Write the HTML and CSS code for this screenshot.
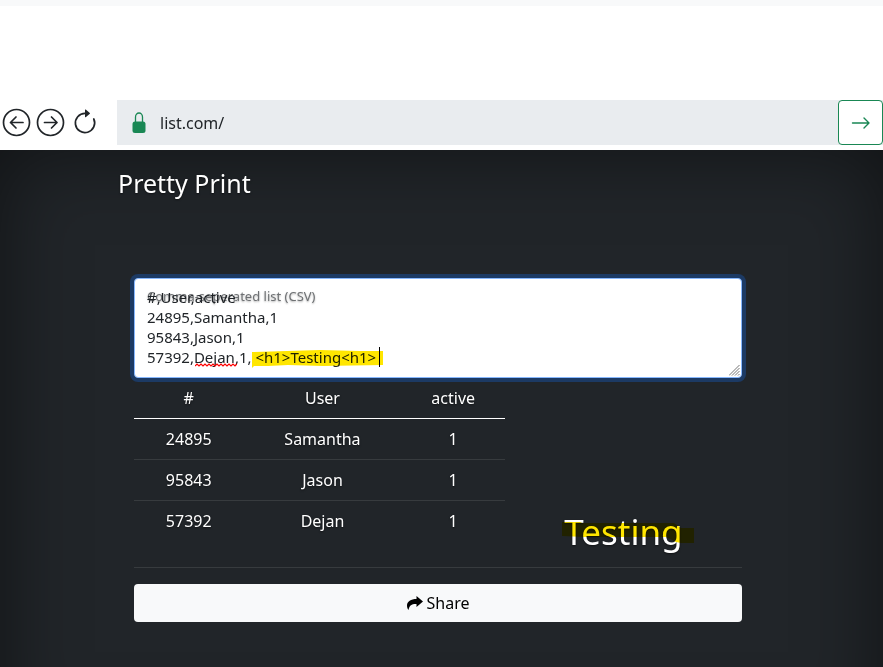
FILE: index.html
```html
<!DOCTYPE html>
<html lang="en">
<head>
<meta charset="utf-8">
<title>Pretty Print</title>
<link rel="stylesheet" href="styles.css">
</head>
<body>
<div class="strip"></div>
<nav class="browser">
  <div class="nav-buttons">
    <button class="icon-button" type="button" aria-label="Back">
      <svg width="28" height="28" viewBox="0 0 28 28" fill="none" stroke="currentColor" stroke-width="1.7" stroke-linecap="round" stroke-linejoin="round"><circle cx="13.500" cy="13.500" r="13"/><path d="M20 13.500H7.500M13 8l-5.500 5.500 5.500 5.500"/></svg>
    </button>
    <button class="icon-button" type="button" aria-label="Forward">
      <svg width="28" height="28" viewBox="0 0 28 28" fill="none" stroke="currentColor" stroke-width="1.7" stroke-linecap="round" stroke-linejoin="round"><circle cx="13.500" cy="13.500" r="13"/><path d="M7.500 13.500H20M14.500 8l5.500 5.500-5.500 5.500"/></svg>
    </button>
    <button class="icon-button" type="button" aria-label="Reload">
      <svg width="28" height="28" viewBox="0 0 16 16" fill="currentColor"><path fill-rule="evenodd" d="M8 3a5 5 0 1 0 4.546 2.914.5.5 0 0 1 .908-.417A6 6 0 1 1 8 2z"/><path d="M8 4.466V.534a.25.25 0 0 1 .41-.192l2.360 1.966c.12.1.12.284 0 .384L8.410 4.658A.25.25 0 0 1 8 4.466"/></svg>
    </button>
  </div>
  <form class="address">
    <label class="lock" for="url" aria-label="Address">
      <svg width="14" height="22" viewBox="0 0 14 22"><path d="M3.500 10V5a3.500 4 0 0 1 7 0v5" fill="none" stroke="currentColor" stroke-width="1.300"/><rect x="0.500" y="9.500" width="13" height="11.500" rx="2.500" fill="currentColor"/></svg>
    </label>
    <input class="url" id="url" type="text" value="list.com/">
    <button class="go" type="button" aria-label="Go">
      <svg width="20" height="14" viewBox="0 0 20 14" fill="none" stroke="currentColor" stroke-width="1.400" stroke-linecap="round" stroke-linejoin="round"><path d="M1.500 7H18M13 2l5 5-5 5"/></svg>
    </button>
  </form>
</nav>
<div class="page">
  <div class="cover">
    <h3 class="brand">Pretty Print</h3>
    <main class="content">
      <div class="field">
        <textarea class="csv" id="csv" spellcheck="false">#,User,active
24895,Samantha,1
95843,Jason,1
57392,Dejan,1, &lt;h1&gt;Testing&lt;h1&gt;</textarea>
        <label class="csv-label" for="csv">Comma-seperated list (CSV)</label>
        <svg class="marker marker-input" width="131" height="18" viewBox="0 0 131 18"><path d="M0 2L68 0l40 1 23 0v14l-60 1-35-1-20 1-14 0-2 2H0z" fill="#ffe600"/></svg>
        <svg class="squiggle" width="42" height="4" viewBox="0 0 42 4"><path d="M0 3l2-2 2 2 2-2 2 2 2-2 2 2 2-2 2 2 2-2 2 2 2-2 2 2 2-2 2 2 2-2 2 2 2-2 2 2 2-2 2 2 2-2" fill="none" stroke="#f00" stroke-width="1.200"/></svg>
        <span class="caret"></span>
        <svg class="grip" width="11" height="11" viewBox="0 0 11 11" fill="none" stroke="#777" stroke-width="1"><path d="M0 10.500L10.500 0M3 10.500L10.500 3M6 10.500L10.500 6M9 10.500L10.500 9"/></svg>
      </div>
      <table class="result">
        <colgroup><col class="c-id"><col class="c-user"><col class="c-active"><col></colgroup>
        <thead>
          <tr><th scope="col">#</th><th scope="col">User</th><th scope="col">active</th></tr>
        </thead>
        <tbody>
          <tr><td>24895</td><td>Samantha</td><td>1</td></tr>
          <tr><td>95843</td><td>Jason</td><td>1</td></tr>
          <tr><td>57392</td><td>Dejan</td><td>1</td><td class="extra"><h1>Testing</h1>
            <svg class="marker marker-result" width="132" height="22" viewBox="0 0 132 22"><path d="M0 0h18l2 1h92l7 5h13v15h-13l-5-1-10-5H22l-22-1z" fill="#ffe600"/></svg></td></tr>
        </tbody>
      </table>
      <button class="share" type="button">
        <svg width="16" height="16" viewBox="0 0 16 16"><path d="M9.500 1L16 6.500 9.500 12V9C5 8.800 2.500 10 1.500 15 .800 14 0 12.500 0 10.500 0 6.500 4 4 9.500 4z" fill="currentColor"/></svg>
        <span>Share</span>
      </button>
    </main>
  </div>
</div>
</body>
</html>
```
FILE: styles.css
```css
* { box-sizing: border-box; }

body {
  margin: 0;
  min-height: 100vh;
  display: flex;
  flex-direction: column;
  background: #fff;
  color: #212529;
  font: 16px/24px "Noto Sans", sans-serif;
}

button, input, textarea { font: inherit; color: inherit; }

svg { display: block; }

.strip { height: 6px; background: #f8f9fa; }

.browser {
  display: flex;
  align-items: center;
  margin-top: 94px;
  margin-bottom: 5px;
}

.nav-buttons {
  display: flex;
  gap: 6px;
  width: 117px;
  padding-left: 3px;
}

.icon-button {
  padding: 0;
  border: 0;
  background: none;
}

.icon-button svg { overflow: visible; }

.address {
  flex: 1;
  display: flex;
  align-items: center;
  height: 45px;
  background: #e9ecef;
}

.lock {
  padding-left: 15px;
  color: #198754;
}

.url {
  flex: 1;
  min-width: 0;
  padding: 0 14px;
  border: 0;
  outline: 0;
  background: none;
}

.go {
  display: grid;
  place-items: center;
  width: 45px;
  height: 45px;
  padding: 0;
  border: 1px solid #198754;
  border-radius: 4px;
  background: #fff;
  color: #198754;
}

.page {
  position: relative;
  flex: 1;
  padding-right: 7px;
  overflow: hidden;
  background: #212529;
  color: #fff;
  text-shadow: 0 1px 2px rgba(0, 0, 0, .5);
}

/* The vignette continues past the lower edge of the window. */
.page::before {
  content: "";
  position: absolute;
  inset: 0 0 -80px;
  box-shadow: inset 0 0 80px rgba(0, 0, 0, .5);
}

.cover {
  position: relative;
  max-width: 672px;
  margin: 0 auto;
  padding: 16px;
}

.brand {
  margin: 0;
  font-size: 25px;
  font-weight: 400;
  line-height: 34px;
}

.content {
  padding: 78px 16px 29px;
}

.field {
  position: relative;
  color: #212529;
}

.csv {
  display: block;
  width: 100%;
  height: 100px;
  padding: 8px 12px;
  border: 1px solid #86b7fe;
  border-radius: 4px;
  outline: 0;
  background: #fff;
  box-shadow: 0 0 0 4px #1c3a64;
  font-size: 15px;
  line-height: 20px;
  resize: none;
}

.csv-label {
  position: absolute;
  top: 8px;
  left: 13px;
  font-size: 13px;
  line-height: 20px;
  opacity: .65;
  pointer-events: none;
}

.marker {
  position: absolute;
  mix-blend-mode: multiply;
  pointer-events: none;
}

.marker-input { top: 72px; left: 118px; }

.squiggle { position: absolute; top: 85px; left: 61px; }

.caret {
  position: absolute;
  top: 69px;
  left: 245px;
  width: 1px;
  height: 20px;
  background: #000;
}

.grip {
  position: absolute;
  right: 2px;
  bottom: 2px;
  pointer-events: none;
}

.result {
  width: 100%;
  margin-bottom: 16px;
  border-collapse: collapse;
  table-layout: fixed;
  text-align: center;
}

.c-id { width: 18%; }
.c-user { width: 26%; }
.c-active { width: 17%; }

.result th,
.result td {
  padding: 8px;
  border-bottom: 1px solid #373b3e;
  font-weight: 400;
  vertical-align: top;
}

.result th { border-bottom-color: #fff; }

.result .extra { position: relative; }

.extra h1 {
  margin: 0 0 4px;
  font-size: 35px;
  font-weight: 400;
  line-height: 46px;
}

.marker-result { top: 21px; left: 57px; }

.share {
  display: flex;
  align-items: center;
  justify-content: center;
  gap: 4px;
  width: 100%;
  height: 38px;
  border: 0;
  border-radius: 4px;
  background: #f8f9fa;
  color: #000;
}
```
